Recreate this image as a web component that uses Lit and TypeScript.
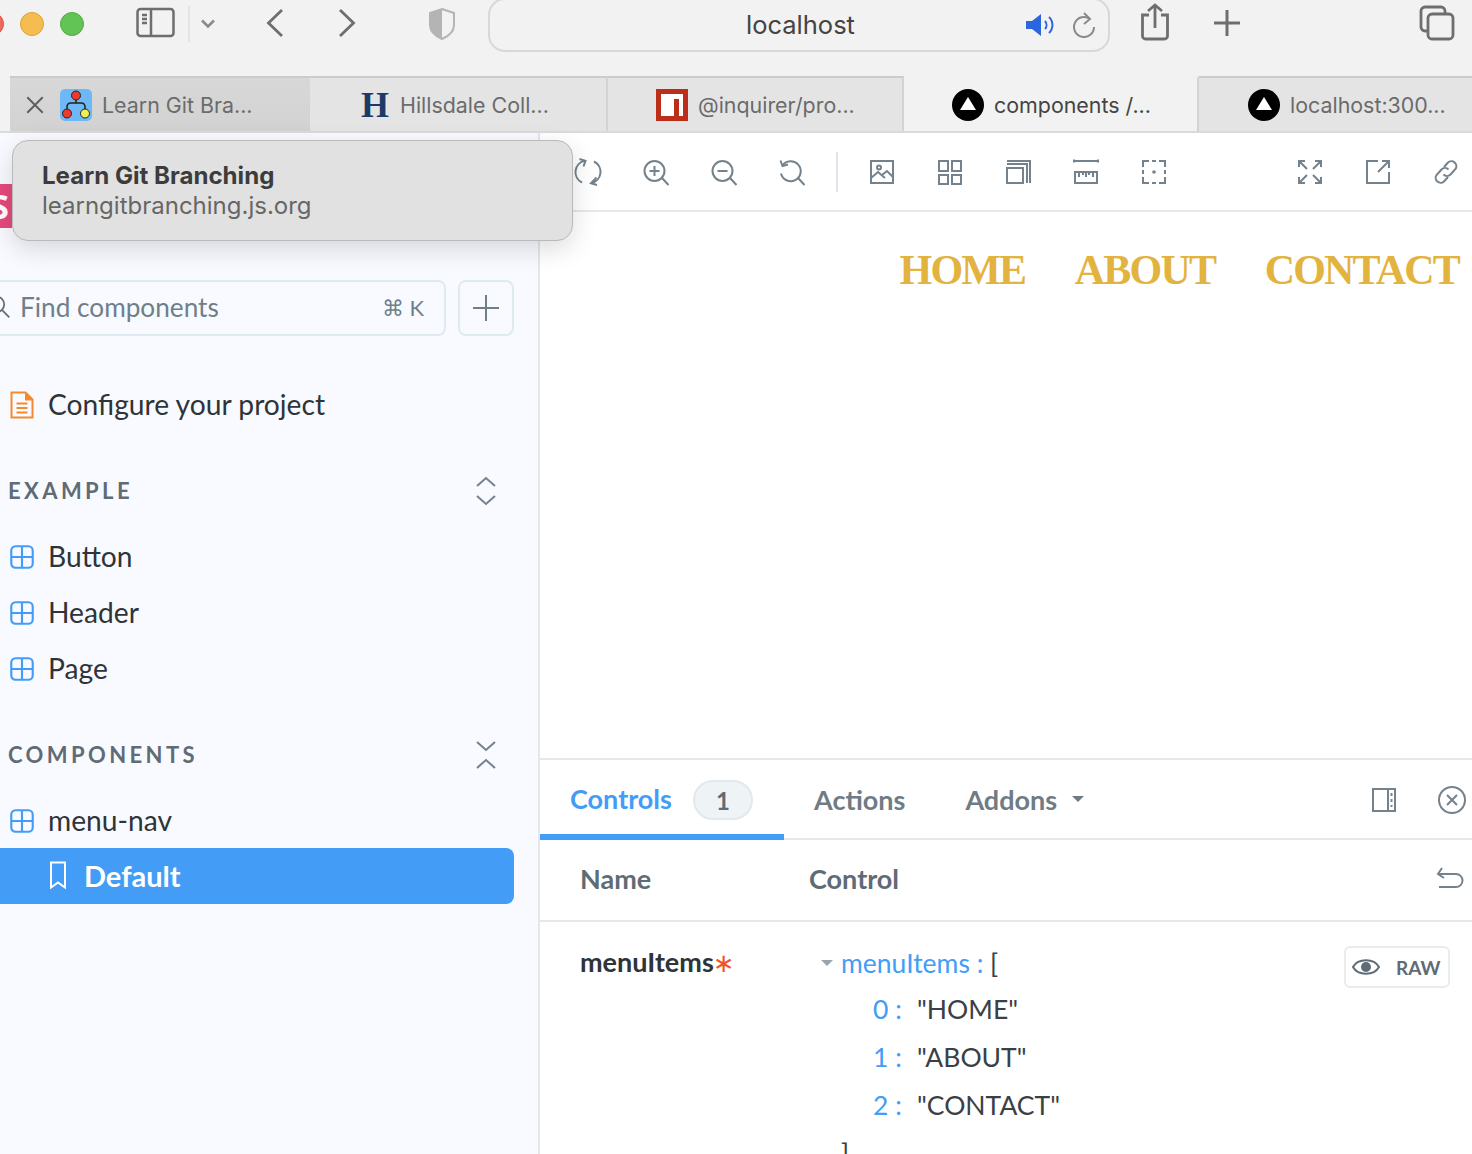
import { LitElement, html, css, svg } from 'lit';
import { customElement } from 'lit/decorators.js';

const icon = (size: number, body: unknown, cls = '') => html`<svg class="ico ${cls}" width=${size} height=${size} viewBox="0 0 28 28" fill="none" stroke="currentColor" stroke-width="2">${body}</svg>`;

const toolIcons = {
  sync: svg`<path d="M11 2.800A11.500 11.500 0 0 0 8 24.500M17 25.200A11.500 11.500 0 0 0 20 3.500"/><path d="M5.500 1l6 1.800-2 5.700M22.500 19.500l-5.500 5.700 6 1.800"/>`,
  zoomIn: svg`<circle cx="12.500" cy="13" r="10"/><path d="M20 20l6.500 7M12.500 8v10M7.500 13h10"/>`,
  zoomOut: svg`<circle cx="12.500" cy="13" r="10"/><path d="M20 20l6.500 7M7.500 13h10"/>`,
  zoomReset: svg`<path d="M4.500 7.500a10 10 0 1 1-1.500 8"/><path d="M2.500 2.500l2 5.500 5.500-1.500M20 20l6.500 7"/>`,
  image: svg`<rect x="3" y="3" width="22" height="22"/><circle cx="11" cy="9.500" r="2"/><path d="M3 20l7-6 7 6M14 17l5-4 6 6"/>`,
  grid: svg`<path d="M3 3h9v10H3zM16 3h9v10h-9zM3 17h9v9H3zM16 17h9v9h-9z"/>`,
  layers: svg`<rect x="3" y="10" width="16" height="15"/><path d="M3 6h20v19M3 3h23v22"/>`,
  ruler: svg`<path d="M2 3h24M2 1.500v3M26 1.500v3"/><path d="M3 14h22v11H3zM7 14v5M11 14v3M14 14v5M17 14v3M21 14v5"/>`,
  outline: svg`<path d="M9 3H3v6M19 3h6v6M9 25H3v-6M19 25h6v-6M12 3h4M12 25h4M3 12v4M25 12v4"/><circle cx="14" cy="14" r="1.800" fill="currentColor" stroke="none"/>`,
  full: svg`<path d="M3 3l8 8M3 9V3h6M25 3l-8 8M19 3h6v6M3 25l8-8M3 19v6h6M25 25l-8-8M19 25h6v-6"/>`,
  share: svg`<path d="M14 3H3v22h22V14M14 14L25 3M18 3h7v7"/>`,
  link: svg`<path d="M12 9l4-4.500a5 5 0 0 1 7.500 6.500l-5 5.500a5 5 0 0 1-7 0M16 19l-4 4.500a5 5 0 0 1-7.500-6.500l5-5.500a5 5 0 0 1 7 0"/>`,
};

const componentIcon = () => icon(24, svg`<rect x="1.500" y="1.500" width="25" height="25" rx="5" stroke-width="2.500"/><path d="M14 2v24M2 14h24" stroke-width="2.500"/>`, 'blue');

const chevrons = (d: string) => html`<svg class="ico" width="22" height="32" viewBox="0 0 22 32" fill="none" stroke="currentColor" stroke-width="2">${svg`<path d=${d}/>`}</svg>`;

const triangleFavicon = html`<span class="vercel"></span>`;

@customElement('app-root')
export class AppRoot extends LitElement {
  static styles = css`
    :host {
      display: block;
      position: relative;
      width: 1472px;
      height: 1154px;
      overflow: hidden;
      background: #fff;
      font-family: Lato, "Noto Sans", sans-serif;
      color: #2e3438;
    }
    .ico { display: block; flex: none; }
    .blue { color: #439df6; }

    /* safari toolbar */
    .chrome {
      height: 76px;
      box-sizing: border-box;
      padding-bottom: 28px;
      background: #f2f2f2;
      display: flex;
      align-items: center;
      color: #6e6e6e;
      font-family: Inter, sans-serif;
    }
    .light { width: 24px; height: 24px; border-radius: 50%; flex: none; box-sizing: border-box; }
    .red { background: #ee6a5f; border: 1px solid #d8564b; margin-left: -20px; }
    .yellow { background: #f5bd4f; border: 1px solid #dca33a; margin-left: 16px; }
    .green { background: #61c454; border: 1px solid #52ab46; margin-left: 16px; }
    .c-side { margin: -2px 0 0 52px; }
    .c-div { width: 2px; height: 36px; background: #e4e4e4; margin-left: 12px; flex: none; }
    .c-down { margin-left: 11px; }
    .c-back { margin: -2px 0 0 51px; }
    .c-fwd { margin: -2px 0 0 54px; }
    .c-shield { margin: -1px 0 0 72px; color: #b4b4b4; }
    .url {
      flex: none;
      box-sizing: border-box;
      width: 622px;
      height: 54px;
      margin: 1px 0 0 32px;
      border: 2px solid #d8d8d8;
      border-radius: 17px;
      display: flex;
      align-items: center;
      padding-right: 12px;
    }
    .url-text { font-size: 25.500px; color: #444; margin-left: 256px; width: 284px; }
    .c-speak { color: #2a66de; }
    .c-reload { margin-left: 18px; color: #8a8a8a; }
    .c-share { margin: -5px 0 0 30px; }
    .c-plus { margin: -2px 0 0 43px; }
    .c-tabs { margin: -3px 0 0 178px; }

    /* tab strip */
    .tabs {
      height: 57px;
      box-sizing: border-box;
      display: flex;
      background: #f2f2f2;
      border-bottom: 2px solid #dadada;
      font-family: Inter, sans-serif;
      font-size: 21.400px;
      color: #6b6b6b;
    }
    .tab {
      flex: none;
      box-sizing: border-box;
      display: flex;
      align-items: center;
      background: #e4e4e4;
      border-top: 2px solid #cbcbcb;
      border-right: 2px solid #d3d3d3;
      white-space: nowrap;
    }
    .tab.lead { width: 300px; margin-left: 10px; background: linear-gradient(#d8d8d8, #d2d2d2); padding-left: 16px; border-right: 0; }
    .tab.t2 { width: 298px; padding-left: 51px; }
    .tab.t3 { width: 296px; padding-left: 48px; }
    .tab.active { width: 295px; padding-left: 48px; background: #f2f2f2; color: #444; border-top-color: #f2f2f2; }
    .tab.t5 { width: 273px; padding-left: 49px; border-right: 0; }
    .tab .fav { margin-right: 10px; flex: none; }
    .tab .close { margin-right: 16px; color: #5e5e5e; }
    .hill { font: bold 36px "Liberation Serif", serif; color: #1c3a68; width: 26px; margin-right: 13px; line-height: 32px; }
    .npm { width: 32px; height: 32px; background: #bc2e1a; margin-right: 10px; flex: none; display: flex; align-items: center; justify-content: center; }
    .npm i { display: block; width: 22px; height: 22px; background: linear-gradient(#bc2e1a, #bc2e1a) 13px 5px / 5px 17px no-repeat, #fff; }
    .vercel { width: 32px; height: 32px; border-radius: 50%; background: #000; margin-right: 10px; flex: none; display: flex; align-items: center; justify-content: center; }
    .vercel::after { content: ""; width: 0; height: 0; border-left: 8px solid transparent; border-right: 8px solid transparent; border-bottom: 13px solid #fff; margin-top: -3px; }

    .body { display: flex; height: 1021px; }

    /* sidebar */
    .side {
      flex: none;
      width: 540px;
      box-sizing: border-box;
      background: #f8faff;
      border-right: 2px solid #e3e8ec;
      overflow: hidden;
      font-size: 28.200px;
    }
    .logo {
      box-sizing: border-box;
      width: 44px;
      height: 44px;
      margin: 51px 0 52px -32px;
      padding-right: 3px;
      background: #e6497e;
      color: #fff;
      font: bold 34px/44px "Open Sans", sans-serif;
      text-align: right;
    }
    .search-row { display: flex; gap: 12px; height: 56px; margin-bottom: 41px; }
    .search, .add {
      box-sizing: border-box;
      height: 56px;
      border: 2px solid #dfe9f2;
      border-radius: 8px;
      display: flex;
      align-items: center;
    }
    .search { width: 466px; margin-left: -20px; flex: none; padding: 0 20px 2px 0; color: #6f7f8a; font-size: 26.200px; }
    .search .mag { margin: 0 9px 0 5px; color: #5f6b75; }
    .search .hint { margin-left: auto; font-size: 22px; }
    .add { width: 56px; flex: none; justify-content: center; color: #6f7f8a; }
    .row { display: flex; align-items: center; gap: 14px; height: 56px; box-sizing: border-box; padding: 0 0 2px 10px; }
    .row .ico { margin-top: 2px; }
    .doc { color: #f58a2c; }
    .heading {
      display: flex;
      align-items: center;
      justify-content: space-between;
      height: 56px;
      box-sizing: border-box;
      margin-top: 30px;
      margin-bottom: 10px;
      padding: 0 41px 0 8px;
      font-size: 22px;
      font-weight: 700;
      letter-spacing: 3.400px;
      color: #5f6b75;
    }
    .heading span { margin-top: -2px; }
    .heading .ico { color: #73828c; }
    .selected {
      display: flex;
      align-items: center;
      width: 514px;
      height: 56px;
      box-sizing: border-box;
      margin-top: -1px;
      padding: 0 0 2px 49px;
      gap: 17px;
      background: #439df6;
      border-radius: 0 8px 8px 0;
      color: #fff;
      font-size: 29px;
      font-weight: 700;
    }

    /* right side */
    .main { flex: 1; min-width: 0; display: flex; flex-direction: column; }
    .toolbar {
      flex: none;
      height: 79px;
      box-sizing: border-box;
      border-bottom: 2px solid #e3e8ec;
      display: flex;
      align-items: center;
      gap: 40px;
      padding: 0 12px 0 34px;
      color: #73828c;
    }
    .sep { width: 2px; height: 40px; background: #dfe5ea; flex: none; margin: 0 -10px; }
    .grow { flex: 1; }
    .preview {
      flex: none;
      height: 546px;
      box-sizing: border-box;
      padding: 35px 13px 0 0;
      display: flex;
      justify-content: flex-end;
      gap: 49.500px;
      font: bold 42px/46px "Liberation Serif", serif;
      letter-spacing: -1.800px;
      color: #e3b33f;
    }
    .panel { flex: 1; border-top: 2px solid #e3e8ec; min-height: 0; overflow: hidden; font-size: 27px; }
    .panel-tabs {
      height: 80px;
      box-sizing: border-box;
      border-bottom: 2px solid #e3e8ec;
      display: flex;
      align-items: center;
      color: #6f7b85;
      font-weight: 700;
    }
    .tab-on {
      align-self: stretch;
      width: 244px;
      box-sizing: border-box;
      border-bottom: 6px solid #439df6;
      margin-bottom: -2px;
      display: flex;
      align-items: center;
      padding: 6px 0 0 30px;
      color: #439df6;
      gap: 21px;
    }
    .tab-on span:first-child { margin-top: -3px; }
    .badge {
      box-sizing: border-box;
      width: 60px;
      height: 40px;
      border: 2px solid #e3e8ec;
      border-radius: 20px;
      background: #eef3f6;
      color: #5f6b75;
      font-size: 24px;
      display: flex;
      align-items: center;
      justify-content: center;
    }
    .p-actions { margin-left: 30px; }
    .p-addons { margin-left: 60px; display: flex; align-items: center; gap: 15px; }
    .caret { width: 0; height: 0; border-left: 6px solid transparent; border-right: 6px solid transparent; border-top: 6px solid #6f7b85; }
    .p-icons { margin-left: auto; display: flex; gap: 40px; padding: 2px 6px 0 0; color: #73828c; }
    .grid-row { display: grid; grid-template-columns: 229px 1fr auto; padding: 0 22px 0 40px; }
    .thead { height: 82px; box-sizing: border-box; padding-bottom: 4px; border-bottom: 2px solid #e3e8ec; align-items: center; font-weight: 700; color: #5f6b75; }
    .thead .ico { color: #73828c; margin: 3px -14px 0 0; }
    .tbody { padding-top: 17px; align-items: start; }
    .name { font-weight: 700; color: #2e3438; line-height: 48px; margin-top: -1px; }
    .name b { color: #f1532a; font: 400 26px/48px "DejaVu Sans", sans-serif; margin-left: -1px; }
    .tree { line-height: 48px; color: #3a4046; margin-left: 12px; font-size: 26.500px; }
    .tree .key { color: #439df6; }
    .tline { display: flex; align-items: center; height: 46px; box-sizing: border-box; padding-top: 2px; }
    .tcaret { width: 0; height: 0; border-left: 6px solid transparent; border-right: 6px solid transparent; border-top: 6px solid #9aa5ad; margin-right: 8px; }
    .titem { display: flex; height: 48px; padding-left: 52px; }
    .titem .key { width: 44px; flex: none; }
    .tend { padding-left: 20px; }
    .raw {
      box-sizing: border-box;
      width: 106px;
      height: 42px;
      margin-top: 7px;
      border: 2px solid #e8ecef;
      border-radius: 6px;
      display: flex;
      align-items: center;
      gap: 16px;
      padding-left: 6px;
      font-size: 19px;
      font-weight: 700;
      color: #5f6b75;
    }

    /* hover card over the tabs */
    .tooltip {
      position: absolute;
      left: 12px;
      top: 140px;
      width: 561px;
      height: 101px;
      box-sizing: border-box;
      padding: 20px 0 0 29px;
      border: 1px solid #b9b9b9;
      border-radius: 16px;
      background: #e1e1e1;
      box-shadow: 0 8px 26px rgba(0, 0, 0, .14);
      font-family: Inter, sans-serif;
      font-size: 24px;
      line-height: 30px;
      color: #666;
    }
    .tooltip strong { display: block; color: #3c3c3c; font-weight: 700; font-size: 24.100px; }
  `;

  render() {
    const tools = Object.values(toolIcons);
    return html`
      <div class="chrome">
        <span class="light red"></span><span class="light yellow"></span><span class="light green"></span>
        <svg class="ico c-side" width="40" height="32" viewBox="0 0 40 32" fill="none" stroke="currentColor" stroke-width="2.500"><rect x="1.500" y="2" width="36" height="27" rx="3"/><path d="M15 2v27M6 8h5M6 12h5M6 16h5"/></svg>
        <span class="c-div"></span>
        <svg class="ico c-down" width="14" height="10" viewBox="0 0 14 10" fill="none" stroke="#8a8a8a" stroke-width="2.500"><path d="M1 1.500l6 6 6-6"/></svg>
        <svg class="ico c-back" width="18" height="30" viewBox="0 0 18 30" fill="none" stroke="currentColor" stroke-width="2.800"><path d="M16 2L2.500 15 16 28"/></svg>
        <svg class="ico c-fwd" width="18" height="30" viewBox="0 0 18 30" fill="none" stroke="currentColor" stroke-width="2.800"><path d="M2 2l13.500 13L2 28"/></svg>
        <svg class="ico c-shield" width="28" height="34" viewBox="0 0 28 34"><path fill="none" stroke="currentColor" stroke-width="2" d="M14 2l12 4v12c0 7-5 11-12 14C7 29 2 25 2 18V6z"/><path fill="currentColor" d="M14 2L2 6v12c0 7 5 11 12 14z"/></svg>
        <div class="url">
          <span class="url-text">localhost</span>
          <svg class="ico c-speak" width="28" height="24" viewBox="0 0 28 24"><path fill="currentColor" d="M0 8h6l9-7v22l-9-7H0z"/><path fill="none" stroke="currentColor" stroke-width="2" d="M19 8a6 6 0 0 1 0 8M23 4a11 11 0 0 1 0 16"/></svg>
          <svg class="ico c-reload" width="24" height="26" viewBox="0 0 24 26" fill="none" stroke="currentColor" stroke-width="2"><path d="M18 7a10 10 0 1 0 4 8"/><path d="M12 1l6 6-6 5"/></svg>
        </div>
        <svg class="ico c-share" width="30" height="38" viewBox="0 0 30 38" fill="none" stroke="currentColor" stroke-width="2.800"><path d="M9 12H2.500v21a3 3 0 0 0 3 3h19a3 3 0 0 0 3-3V12H21M15 25V2M8 8l7-6 7 6"/></svg>
        <svg class="ico c-plus" width="28" height="28" viewBox="0 0 28 28" fill="none" stroke="currentColor" stroke-width="3"><path d="M14 1v26M1 14h26"/></svg>
        <svg class="ico c-tabs" width="36" height="36" viewBox="0 0 36 36" fill="none" stroke="currentColor" stroke-width="2.800"><rect x="9" y="9" width="25" height="25" rx="4"/><path d="M9 26H6a4 4 0 0 1-4-4V6a4 4 0 0 1 4-4h16a4 4 0 0 1 4 4v3"/></svg>
      </div>
      <div class="tabs">
        <div class="tab lead">
          ${icon(18, svg`<path d="M2 2l24 24M26 2L2 26" stroke-width="3"/>`, 'close')}
          <svg class="fav" width="32" height="32" viewBox="0 0 32 32"><rect width="32" height="32" rx="5" fill="#6fb8f8"/><path d="M16 8v6M7 21v-3q0-4 4-4h10q4 0 4 4v3" fill="none" stroke="#222" stroke-width="1.500"/><circle cx="16" cy="6.500" r="4.500" fill="#ee3a2a" stroke="#222"/><circle cx="7" cy="24.500" r="4.500" fill="#ee3a2a" stroke="#222"/><circle cx="25" cy="24.500" r="4.500" fill="#eeee55" stroke="#222"/></svg>
          Learn Git Bra...
        </div>
        <div class="tab t2"><span class="hill">H</span>Hillsdale Coll...</div>
        <div class="tab t3"><span class="npm"><i></i></span>@inquirer/pro...</div>
        <div class="tab active">${triangleFavicon}components /...</div>
        <div class="tab t5">${triangleFavicon}localhost:300...</div>
      </div>
      <div class="body">
        <aside class="side">
          <div class="logo">S</div>
          <div class="search-row">
            <div class="search">
              ${icon(24, svg`<circle cx="11" cy="11" r="9"/><path d="M18 18l8 8"/>`, 'mag')}
              Find components
              <span class="hint">⌘ K</span>
            </div>
            <div class="add">${icon(28, svg`<path d="M14 1v26M1 14h26"/>`)}</div>
          </div>
          <div class="row">
            <svg class="ico doc" width="24" height="28" viewBox="0 0 24 28" fill="none" stroke="currentColor" stroke-width="2"><path d="M1.500 1.500h14l7 7v18h-21z"/><path d="M15 1.500l8 8h-8z" fill="currentColor" stroke="none"/><path d="M6.500 12.500h11M6.500 17h11M6.500 21.500h11"/></svg>
            Configure your project
          </div>
          <div class="heading">
            <span>EXAMPLE</span>
            ${chevrons('M2 11l9-8 9 8M2 21l9 8 9-8')}
          </div>
          ${['Button', 'Header', 'Page'].map((name) => html`<div class="row">${componentIcon()}${name}</div>`)}
          <div class="heading">
            <span>COMPONENTS</span>
            ${chevrons('M2 3l9 8 9-8M2 29l9-8 9 8')}
          </div>
          <div class="row">${componentIcon()}menu-nav</div>
          <div class="selected">
            <svg class="ico" width="18" height="28" viewBox="0 0 18 28" fill="none" stroke="currentColor" stroke-width="2"><path d="M2 1.500h14v25l-7-5-7 5z"/></svg>
            Default
          </div>
        </aside>
        <div class="main">
          <div class="toolbar">
            ${tools.slice(0, 4).map((body) => icon(28, body))}
            <span class="sep"></span>
            ${tools.slice(4, 9).map((body) => icon(28, body))}
            <span class="grow"></span>
            ${tools.slice(9).map((body) => icon(28, body))}
          </div>
          <div class="preview"><span>HOME</span><span>ABOUT</span><span>CONTACT</span></div>
          <div class="panel">
            <div class="panel-tabs">
              <div class="tab-on"><span>Controls</span><span class="badge">1</span></div>
              <span class="p-actions">Actions</span>
              <span class="p-addons">Addons <span class="caret"></span></span>
              <div class="p-icons">
                ${icon(28, svg`<path d="M3 3h22v22H3zM18 3v22" /><path d="M21.500 7v3M21.500 13v3M21.500 19v2"/>`)}
                ${icon(28, svg`<circle cx="14" cy="14" r="13"/><path d="M9 9l10 10M19 9L9 19"/>`)}
              </div>
            </div>
            <div class="grid-row thead">
              <span>Name</span><span>Control</span>
              ${icon(28, svg`<path d="M6 2L2 8l6 4M3 8h17a6 6 0 0 1 0 13H3"/>`)}
            </div>
            <div class="grid-row tbody">
              <div class="name">menuItems<b>∗</b></div>
              <div class="tree">
                <div class="tline"><span class="tcaret"></span><span class="key">menuItems :&nbsp;</span>[</div>
                ${['HOME', 'ABOUT', 'CONTACT'].map((v, i) => html`<div class="titem"><span class="key">${i} :</span>"${v}"</div>`)}
                <div class="tend">]</div>
              </div>
              <div class="raw">
                ${icon(28, svg`<path d="M1 14C6 5 22 5 27 14 22 23 6 23 1 14z"/><circle cx="14" cy="14" r="5" fill="currentColor" stroke="none"/>`)}
                RAW
              </div>
            </div>
          </div>
        </div>
      </div>
      <div class="tooltip"><strong>Learn Git Branching</strong>learngitbranching.js.org</div>
    `;
  }
}
